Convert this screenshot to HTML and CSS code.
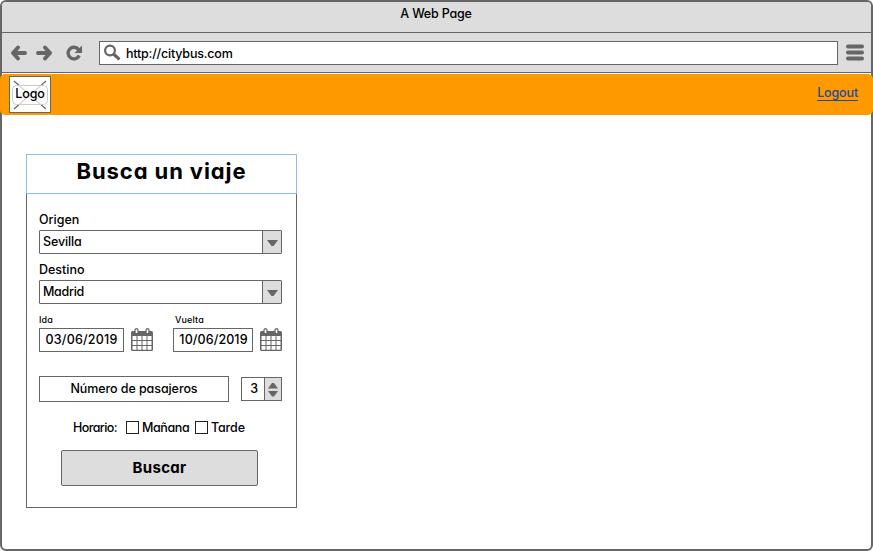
FILE: index.html
```html
<!DOCTYPE html>
<html lang="es">
<head>
<meta charset="utf-8">
<title>A Web Page</title>
<link rel="stylesheet" href="styles.css">
</head>
<body>
<div class="window">
  <div class="titlebar"><span class="t-title">A Web Page</span></div>
  <div class="toolbar">
    <svg class="nav" width="76" height="20" viewBox="0 0 76 20" fill="none" stroke="#666" stroke-width="4" stroke-linecap="round" stroke-linejoin="round">
      <path d="M9 4.500L4 10l5 5.500M4 10H16"/>
      <path d="M36 4.500l5 5.500-5 5.500M41 10H29"/>
      <path d="M69.500 6.500A5.800 5.800 0 1 0 70.200 12.500" stroke-width="3.400" stroke-linecap="butt"/>
      <path d="M73 2.500v7.500h-7.500z" fill="#666" stroke="none"/>
    </svg>
    <div class="address">
      <svg width="18" height="18" viewBox="0 0 18 18" fill="none" stroke="#666"><circle cx="6" cy="6.500" r="4.900" stroke-width="2.200"/><path d="M10 10.500l4.500 4" stroke-width="3.200" stroke-linecap="round"/></svg>
      <span class="t-url">http://citybus.com</span>
    </div>
    <svg class="menu" width="18" height="17" viewBox="0 0 18 17" stroke="#666" stroke-width="4" stroke-linecap="round"><path d="M2 2.500h14M2 8.500h14M2 14.500h14"/></svg>
  </div>
  <header class="header">
    <div class="logo">
      <svg width="40" height="35" viewBox="0 0 40 35"><path d="M4 4l32 28M36 4L4 32" stroke="#666" stroke-width="1.200"/><rect x="2.500" y="8.500" width="35" height="19" rx="4" fill="#fff" fill-opacity=".72" stroke="#ccc"/></svg>
      <span class="t-logo">Logo</span>
    </div>
    <a class="logout" href="#">Logout</a>
  </header>
  <main class="card">
    <h1 class="card-title"><span>Busca un viaje</span></h1>
    <form class="form">
      <div class="label t-origin">Origen</div>
      <div class="combo"><span class="t-sevilla">Sevilla</span><i><svg width="11" height="6"><path d="M0 0h11L6.500 6h-2z" fill="#666"/></svg></i></div>
      <div class="label t-dest">Destino</div>
      <div class="combo"><span class="t-madrid">Madrid</span><i><svg width="11" height="6"><path d="M0 0h11L6.500 6h-2z" fill="#666"/></svg></i></div>
      <div class="dates">
        <div class="date">
          <div class="small t-ida">Ida</div>
          <div class="row"><div class="field first"><span class="t-date">03/06/2019</span></div>
          <svg class="cal" width="22" height="24" viewBox="0 0 22 24"><rect y="3" width="22" height="20" rx="1.500" fill="#666"/><path d="M1.500 8h4v4h-4zM6.500 8h4v4h-4zM11.500 8h4v4h-4zM16.500 8h4v4h-4zM1.500 13h4v4h-4zM6.500 13h4v4h-4zM11.500 13h4v4h-4zM16.500 13h4v4h-4zM1.500 18h4v3.700h-4zM6.500 18h4v3.700h-4zM11.500 18h4v3.700h-4zM16.500 18h4v3.700h-4z" fill="#fff"/><rect x="4" y=".7" width="3" height="5" rx="1.500" fill="#fff" stroke="#666" stroke-width="1.300"/><rect x="15" y=".7" width="3" height="5" rx="1.500" fill="#fff" stroke="#666" stroke-width="1.300"/></svg></div>
        </div>
        <div class="date">
          <div class="small t-vuelta">Vuelta</div>
          <div class="row"><div class="field"><span class="t-date2">10/06/2019</span></div>
          <svg class="cal" width="22" height="24" viewBox="0 0 22 24"><rect y="3" width="22" height="20" rx="1.500" fill="#666"/><path d="M1.500 8h4v4h-4zM6.500 8h4v4h-4zM11.500 8h4v4h-4zM16.500 8h4v4h-4zM1.500 13h4v4h-4zM6.500 13h4v4h-4zM11.500 13h4v4h-4zM16.500 13h4v4h-4zM1.500 18h4v3.700h-4zM6.500 18h4v3.700h-4zM11.500 18h4v3.700h-4zM16.500 18h4v3.700h-4z" fill="#fff"/><rect x="4" y=".7" width="3" height="5" rx="1.500" fill="#fff" stroke="#666" stroke-width="1.300"/><rect x="15" y=".7" width="3" height="5" rx="1.500" fill="#fff" stroke="#666" stroke-width="1.300"/></svg></div>
        </div>
      </div>
      <div class="passengers">
        <div class="pbox"><span class="t-pas">Número de pasajeros</span></div>
        <div class="stepper"><span>3</span><i><svg width="10" height="15"><path d="M0 6.500h10L6 1H4zM0 9h10L6 14.500H4z" fill="#666"/></svg></i></div>
      </div>
      <div class="schedule">
        <span class="t-horario">Horario:</span>
        <b class="check"></b><span class="t-man">Mañana</span>
        <b class="check"></b><span class="t-tarde">Tarde</span>
      </div>
      <div class="submit"><span>Buscar</span></div>
    </form>
  </main>
</div>
</body>
</html>
```
FILE: styles.css
```css
* { box-sizing: border-box; }
body { margin: 0; background: #fff; font: 450 12.5px/16px Inter, "Liberation Sans", sans-serif; font-feature-settings: "cv11", "ss03"; color: #000; letter-spacing: -0.15px; }
span, .small, .label, .logout { white-space: nowrap; }
svg { display: block; flex: none; }
.window { width: 873px; height: 551px; border: 2px solid #666; border-radius: 6px; }
.titlebar { height: 31px; padding: 4px 1px 0 0; background: #ddd; border-bottom: 1px solid #666; border-radius: 4px 4px 0 0; text-align: center; }
.t-title { letter-spacing: -0.2px; }
.toolbar { height: 40px; display: flex; align-items: center; background: #ddd; border-bottom: 1px solid #666; padding-left: 7px; }
.nav { margin-right: 14px; }
.address { width: 739px; height: 24px; display: flex; align-items: center; gap: 4px; padding-left: 4px; background: #fff; border: 1px solid #666; }
.t-url { margin-top: 2px; letter-spacing: -0.2px; }
.menu { margin-left: 8px; }
.header { height: 41px; margin: 1px -2px 0; padding: 2px 15px 0 9px; display: flex; justify-content: space-between; align-items: flex-start; background: #f90; border-radius: 5px; position: relative; }
.logo { width: 42px; height: 37px; display: grid; place-items: center; background: #fff; border: 1px solid #666; }
.logo > * { grid-area: 1 / 1; }
.t-logo { z-index: 1; margin-top: -1px; }
.logout { margin-top: 9px; color: #1d4aa0; text-decoration: underline; text-decoration-thickness: 1px; text-decoration-skip-ink: none; text-underline-offset: 3px; }
.card { width: 271px; height: 354px; margin: 39px 0 0 24px; border: 1px solid #666; }
.card-title { height: 40px; margin: -1px; border: 1px solid #94b8ee; font-size: 22px; line-height: 33px; font-weight: 650; letter-spacing: 0.9px; text-align: center; }
.form { padding: 18px 14px 0 12px; }
.label { height: 19px; letter-spacing: 0; line-height: 18px; }
.combo { height: 24px; margin-bottom: 7px; display: flex; justify-content: space-between; padding-left: 3px; border: 1px solid #666; border-radius: 1px; line-height: 21px; }
.t-madrid { letter-spacing: -0.3px; }
.combo i { width: 19px; display: grid; place-items: center; background: #ddd; border-left: 1px solid #666; }
.combo svg { margin-top: 2px; }
.dates { display: flex; gap: 20px; margin-top: 9px; }
.small { height: 15px; font-size: 9px; line-height: 14px; letter-spacing: 0.15px; }
.t-vuelta { padding-left: 2px; }
.row { display: flex; gap: 7px; }
.field { width: 80px; height: 24px; border: 1px solid #666; line-height: 21px; text-align: center; letter-spacing: 0.2px; }
.t-date2 { letter-spacing: 0.1px; padding-left: 1px; }
.field.first { width: 85px; }
.passengers { margin-top: 24px; display: flex; gap: 12px; align-items: center; }
.pbox { width: 190px; height: 26px; border: 1px solid #666; line-height: 23px; text-align: center; letter-spacing: -0.08px; }
.stepper { width: 41px; height: 24px; display: flex; border: 1px solid #666; line-height: 22px; }
.stepper span { flex: 1; text-align: center; padding-left: 2px; }
.stepper i { width: 17px; display: grid; place-items: center; background: #ddd; border-left: 1px solid #666; }
.schedule { height: 16px; margin: 17px 0 0 34px; display: flex; align-items: center; line-height: 18px; }
.schedule span { height: 16px; }
.t-horario { width: 53px; letter-spacing: -0.6px; }
.check { width: 13px; height: 13px; border: 1px solid #222; margin-right: 3px; }
.t-man { width: 53px; letter-spacing: -0.4px; }
.submit { width: 197px; height: 36px; margin: 15px 0 0 22px; background: #ddd; border: 1px solid #666; border-radius: 2px; font-size: 15px; font-weight: 650; letter-spacing: 0.35px; line-height: 33px; text-align: center; }
```
